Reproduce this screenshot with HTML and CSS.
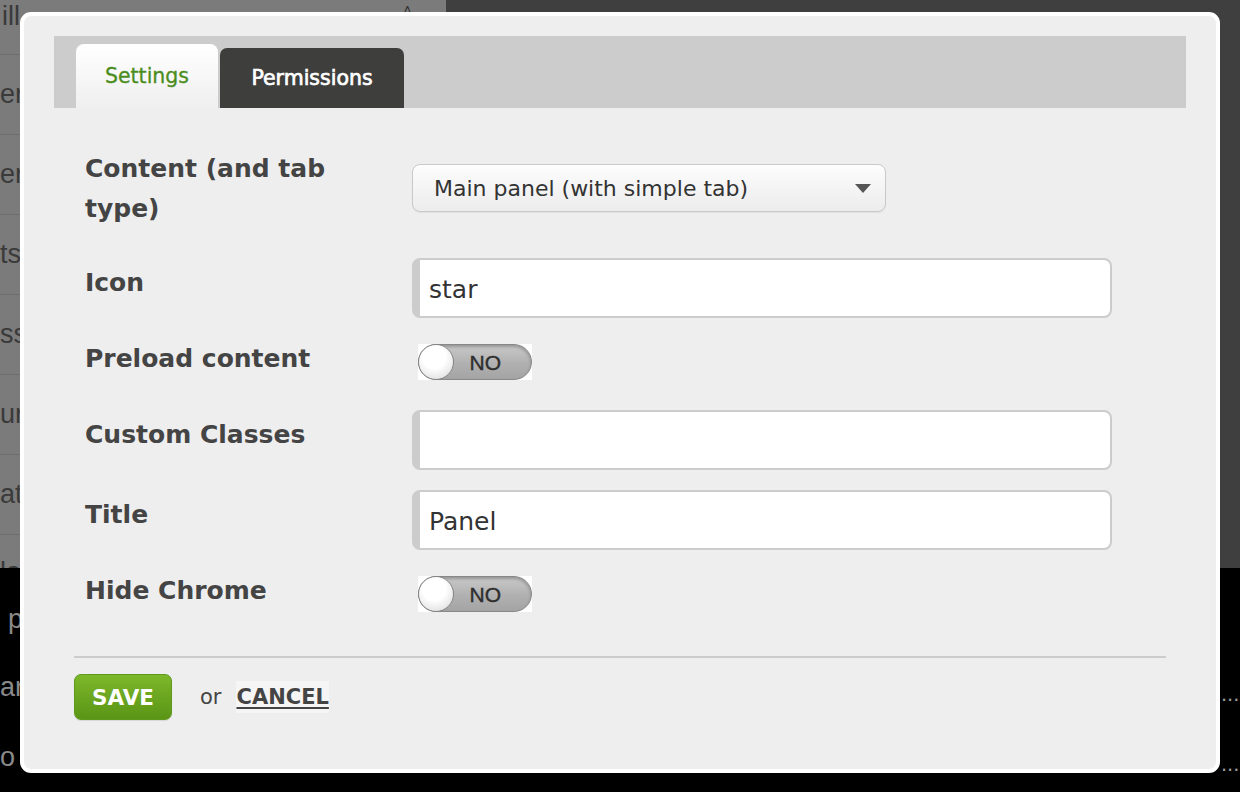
FILE: index.html
```html
<!DOCTYPE html>
<html>
<head>
<meta charset="utf-8">
<link rel="stylesheet" href="styles.css">
</head>
<body>
<div class="page">
  <div class="top">
    <ul class="sidebar">
      <li><span class="frag frag-ill">ill</span><span class="chev">˄</span></li>
      <li><span class="frag">er</span></li>
      <li><span class="frag">er</span></li>
      <li><span class="frag">ts</span></li>
      <li><span class="frag">ss</span></li>
      <li><span class="frag">ur</span></li>
      <li><span class="frag">ate</span></li>
      <li class="last"><span class="frag">la</span></li>
    </ul>
    <div class="main"></div>
  </div>
  <div class="footer">
    <div class="frow"><span class="frag frag-p">p</span></div>
    <div class="frow"><span class="frag">ar</span><span class="dots">...</span></div>
    <div class="frow"><span class="frag">o b</span><span class="dots">...</span></div>
  </div>
</div>

<div class="modal">
  <div class="tabbar">
    <div class="tab tab-active">Settings</div>
    <div class="tab tab-dark">Permissions</div>
  </div>

  <form class="form">
    <div class="row row-first">
      <label class="label">Content (and tab type)</label>
      <div class="select">
        <span>Main panel (with simple tab)</span>
        <svg class="caret" width="16" height="9" viewBox="0 0 16 9"><path d="M0 0 L16 0 L8 9 Z" fill="#555"/></svg>
      </div>
    </div>
    <div class="row row-input">
      <label class="label">Icon</label>
      <div class="input">star</div>
    </div>
    <div class="row row-toggle">
      <label class="label">Preload content</label>
      <div class="toggle"><div class="pill"><span class="knob"></span><span class="no">NO</span></div></div>
    </div>
    <div class="row row-input">
      <label class="label">Custom Classes</label>
      <div class="input"></div>
    </div>
    <div class="row row-input">
      <label class="label">Title</label>
      <div class="input">Panel</div>
    </div>
    <div class="row row-toggle">
      <label class="label">Hide Chrome</label>
      <div class="toggle"><div class="pill"><span class="knob"></span><span class="no">NO</span></div></div>
    </div>
  </form>

  <div class="divider"></div>

  <div class="actions">
    <button class="save" type="button">SAVE</button>
    <span class="or">or</span>
    <a class="cancel" href="#">CANCEL</a>
  </div>
</div>
</body>
</html>
```

FILE: styles.css
```css
* { box-sizing: border-box; }
html, body { margin: 0; padding: 0; }
body {
  width: 1240px;
  height: 792px;
  overflow: hidden;
  background: #000;
  font-family: "Liberation Sans", Arial, sans-serif;
}

.page { width: 1240px; height: 792px; display: flex; flex-direction: column; }

.top { height: 573px; display: flex; overflow: hidden; }
.sidebar {
  width: 446px;
  margin: 0;
  padding: 0;
  list-style: none;
  background: #7b7b7b;
}
.sidebar li {
  height: 80px;
  border-bottom: 1px solid #6e6e6e;
  display: flex;
  align-items: center;
  justify-content: space-between;
  font-size: 27px;
  color: #3a3a3a;
}
.sidebar li:first-child { height: 55px; align-items: flex-start; }
.sidebar li.last { height: 38px; align-items: flex-end; overflow: hidden; }
.sidebar li.last .frag { line-height: 1; margin-bottom: -14px; }
.frag { white-space: nowrap; }
.frag-ill { padding-left: 2px; margin-top: 1px; }
.frag-p { padding-left: 8px; }
.chev { font-size: 16px; color: #333; margin-right: 34px; margin-top: 2px; }
.main { flex: 1; background: #3f3f3f; }

.footer {
  flex: 1;
  background: #000;
  padding-top: 14px;
  color: #8a8a8a;
  font-size: 27px;
}
.frow {
  height: 70px;
  display: flex;
  align-items: center;
  justify-content: space-between;
  overflow: hidden;
}
.frow:first-child { padding-top: 4px; }
.dots {
  font-size: 22px;
  color: #9a9a9a;
  width: 19px;
  white-space: nowrap;
  margin-top: 14px;
}

/* modal */
.modal {
  position: absolute;
  left: 20px;
  top: 12px;
  width: 1200px;
  height: 761px;
  background: #eeeeee;
  border: 4px solid #fff;
  border-radius: 11px;
  padding: 20px 30px 0;
  font-family: "DejaVu Sans", Verdana, sans-serif;
  color: #444;
}

.tabbar {
  height: 72px;
  background: #cccccc;
  display: flex;
  align-items: flex-end;
  gap: 2px;
  padding-left: 22px;
}
.tab {
  font-size: 20.5px;
  text-align: center;
}
.tab-active {
  width: 142px;
  height: 64px;
  line-height: 64px;
  color: #4b8d1d;
  background: linear-gradient(#ffffff, #efefef);
  border-radius: 8px 8px 0 0;
  -webkit-text-stroke: 0.3px #4b8d1d;
}
.tab-dark {
  width: 184px;
  height: 60px;
  line-height: 61px;
  color: #fff;
  background: #3e3e3c;
  border-radius: 7px 7px 0 0;
  font-size: 20.5px;
  -webkit-text-stroke: 0.7px #fff;
}

.form {
  padding: 40px 0 0 31px;
  margin: 0;
  display: flex;
  flex-direction: column;
}
.row {
  display: grid;
  grid-template-columns: 300px 1fr;
  column-gap: 27px;
  align-items: start;
  margin-bottom: 20px;
}
.label {
  font-weight: bold;
  font-size: 25px;
  line-height: 40px;
  color: #444;
}
.row-first { min-height: 90px; }
.row-first .label { padding-top: 1px; }
.row-first .select { margin-top: 16px; }
.row-input .label { padding-top: 5px; }
.row-toggle { min-height: 52px; }
.row-toggle .label { padding-top: 1px; }
.row-toggle .toggle { margin-top: 6px; margin-left: 6px; }

.select {
  width: 474px;
  height: 48px;
  border: 1.5px solid #c9c9c9;
  border-radius: 8px;
  background: linear-gradient(#fdfdfd, #ececec);
  box-shadow: 0 1px 1px rgba(0,0,0,0.06);
  display: flex;
  align-items: center;
  justify-content: space-between;
  padding: 0 14px 0 21px;
  font-size: 22px;
  color: #333;
}
.caret { display: block; margin-top: 1px; }

.input {
  width: 700px;
  height: 60px;
  background: #fff;
  border: 2px solid #cccccc;
  border-left-width: 8px;
  border-radius: 8px;
  padding-left: 9px;
  padding-top: 2px;
  display: flex;
  align-items: center;
  font-size: 25px;
  color: #333;
}

.toggle {
  width: 114px;
  height: 36px;
  background: #fff;
}
.pill {
  width: 114px;
  height: 36px;
  border-radius: 18px;
  border: 1.5px solid #888;
  background: linear-gradient(#c9c9c9, #b0b0b0 55%, #a4a4a4);
  box-shadow: inset 0 2px 3px rgba(0,0,0,0.25);
  display: flex;
  align-items: center;
}
.knob {
  width: 36px;
  height: 36px;
  margin-left: -1.5px;
  border-radius: 50%;
  background: radial-gradient(circle at 45% 35%, #ffffff 40%, #e8e8e8 72%, #cdcdcd);
  border: 1.5px solid #858585;
  flex: none;
}
.no {
  flex: 1;
  text-align: center;
  font-family: "Liberation Sans", Arial, sans-serif;
  font-size: 21px;
  color: #2e2e2e;
  -webkit-text-stroke: 0.4px #2e2e2e;
  padding-right: 14px;
  margin-top: 1px;
}

.divider {
  height: 2px;
  background: #cccccc;
  margin: 14px 20px 0;
}

.actions {
  display: flex;
  align-items: center;
  padding: 16px 0 0 20px;
}
.save {
  width: 98px;
  height: 46px;
  border: 1px solid #5f9a1f;
  border-radius: 7px;
  background: linear-gradient(#7db72a, #5a9516);
  color: #fff;
  font-family: "DejaVu Sans", Verdana, sans-serif;
  font-weight: bold;
  font-size: 21.5px;
  padding: 0;
  box-shadow: 0 1px 1px rgba(0,0,0,0.1);
}
.or {
  margin-left: 28px;
  font-size: 21px;
  color: #444;
}
.cancel {
  margin-left: 15px;
  font-weight: bold;
  font-size: 21px;
  color: #444;
  background: #f5f5f5;
  text-decoration: underline;
  text-decoration-thickness: 2px;
  text-underline-offset: 3px;
  padding: 4px 0;
}
```
